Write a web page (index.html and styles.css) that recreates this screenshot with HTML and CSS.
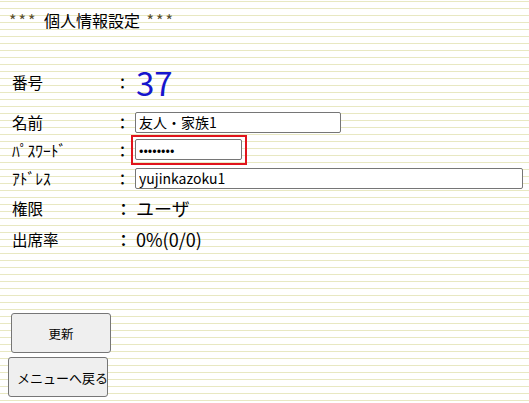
FILE: index.html
```html
<!DOCTYPE html>
<html lang="ja">
<head>
<meta charset="utf-8">
<title>個人情報設定</title>
<link rel="stylesheet" href="styles.css">
</head>
<body>
<div class="page">
  <h1 class="title"><span class="ast">***</span> 個人情報設定 <span class="ast">***</span></h1>
  <div class="form">
    <div class="row row-no">
      <div class="label">番号</div><div class="colon">：</div><div class="value num">37</div>
    </div>
    <div class="row row-in first">
      <div class="label">名前</div><div class="colon">：</div><div class="value"><input class="field name" type="text" value="友人・家族1"></div>
    </div>
    <div class="row row-in">
      <div class="label">ﾊﾟｽﾜｰﾄﾞ</div><div class="colon">：</div><div class="value"><span class="focus-box"><input class="field pass" type="password" value="12345678"></span></div>
    </div>
    <div class="row row-in">
      <div class="label">ｱﾄﾞﾚｽ</div><div class="colon">：</div><div class="value"><input class="field addr" type="text" value="yujinkazoku1"></div>
    </div>
    <div class="row row-auth">
      <div class="label">権限</div><div class="colon big">：</div><div class="value big">ユーザ</div>
    </div>
    <div class="row row-att">
      <div class="label">出席率</div><div class="colon big">：</div><div class="value big">0%(0/0)</div>
    </div>
  </div>
  <div class="buttons">
    <button class="btn update" type="button">更新</button>
    <button class="btn back" type="button">メニューへ戻る</button>
  </div>
</div>
</body>
</html>
```

FILE: styles.css
```css
html, body {
  margin: 0;
  padding: 0;
}
body {
  width: 529px;
  height: 403px;
  overflow: hidden;
  background-color: #ffffff;
  background-image: repeating-linear-gradient(to bottom, #ffffff 0, #ffffff 1px, #e8e8c2 1px, #e8e8c2 2px, #ffffff 2px, #ffffff 7px);
  font-family: "Noto Sans CJK JP", "Noto Sans", sans-serif;
  color: #000;
}
.page {
  padding: 8px 0 0 8px;
}
.title {
  margin: 0;
  padding-left: 1px;
  height: 24px;
  line-height: 24px;
  font-size: 16px;
  font-weight: normal;
  color: #000;
  white-space: nowrap;
  word-spacing: 3px;
}
.ast {
  color: #5a5030;
  letter-spacing: 2px;
}
.form {
  margin-top: 30px;
  display: flex;
  flex-direction: column;
}
.row {
  display: flex;
  align-items: center;
}
.row-no { height: 40px; }
.row-in { height: 28px; }
.row-in.first { margin-top: 6px; }
.row-auth { height: 32px; }
.row-att { height: 30px; }
.label {
  width: 103px;
  padding-left: 4px;
  font-size: 15.5px;
  white-space: nowrap;
}
.colon {
  width: 20px;
  font-size: 15px;
  font-weight: 500;
}
.colon.big {
  font-size: 17px;
}
.value {
  display: flex;
  align-items: center;
}
.num {
  font-size: 33px;
  line-height: 40px;
  color: #1616cc;
  padding-left: 1px;
}
.big {
  font-size: 18px;
}
.value.big {
  padding-left: 1px;
}
.field {
  box-sizing: border-box;
  height: 21px;
  margin: 0;
  padding: 0 3px;
  border: 1px solid #767676;
  border-radius: 2px;
  background: #fff;
  font-family: "Noto Sans CJK JP", "Noto Sans", sans-serif;
  font-size: 14px;
  color: #000;
  outline: none;
}
.name { width: 206px; }
.addr { width: 388px; }
.pass { width: 107px; font-size: 13px; }
.focus-box {
  display: flex;
  margin-left: -4px;
  padding: 2px 3px 3px 2px;
  border: 2px solid #e0141c;
}
.buttons {
  margin-top: 59px;
  display: flex;
  flex-direction: column;
  align-items: flex-start;
  gap: 4px;
}
.btn {
  box-sizing: border-box;
  width: 100px;
  height: 40px;
  margin: 0;
  border: 1px solid #767676;
  border-radius: 3px;
  background: #efefef;
  font-family: "Noto Sans CJK JP", "Noto Sans", sans-serif;
  font-size: 12.5px;
  color: #000;
  white-space: nowrap;
  overflow: hidden;
}
.update {
  margin-left: 3px;
}
.back {
  padding: 0 0 0 8px;
  text-align: left;
  font-size: 13px;
}
```
